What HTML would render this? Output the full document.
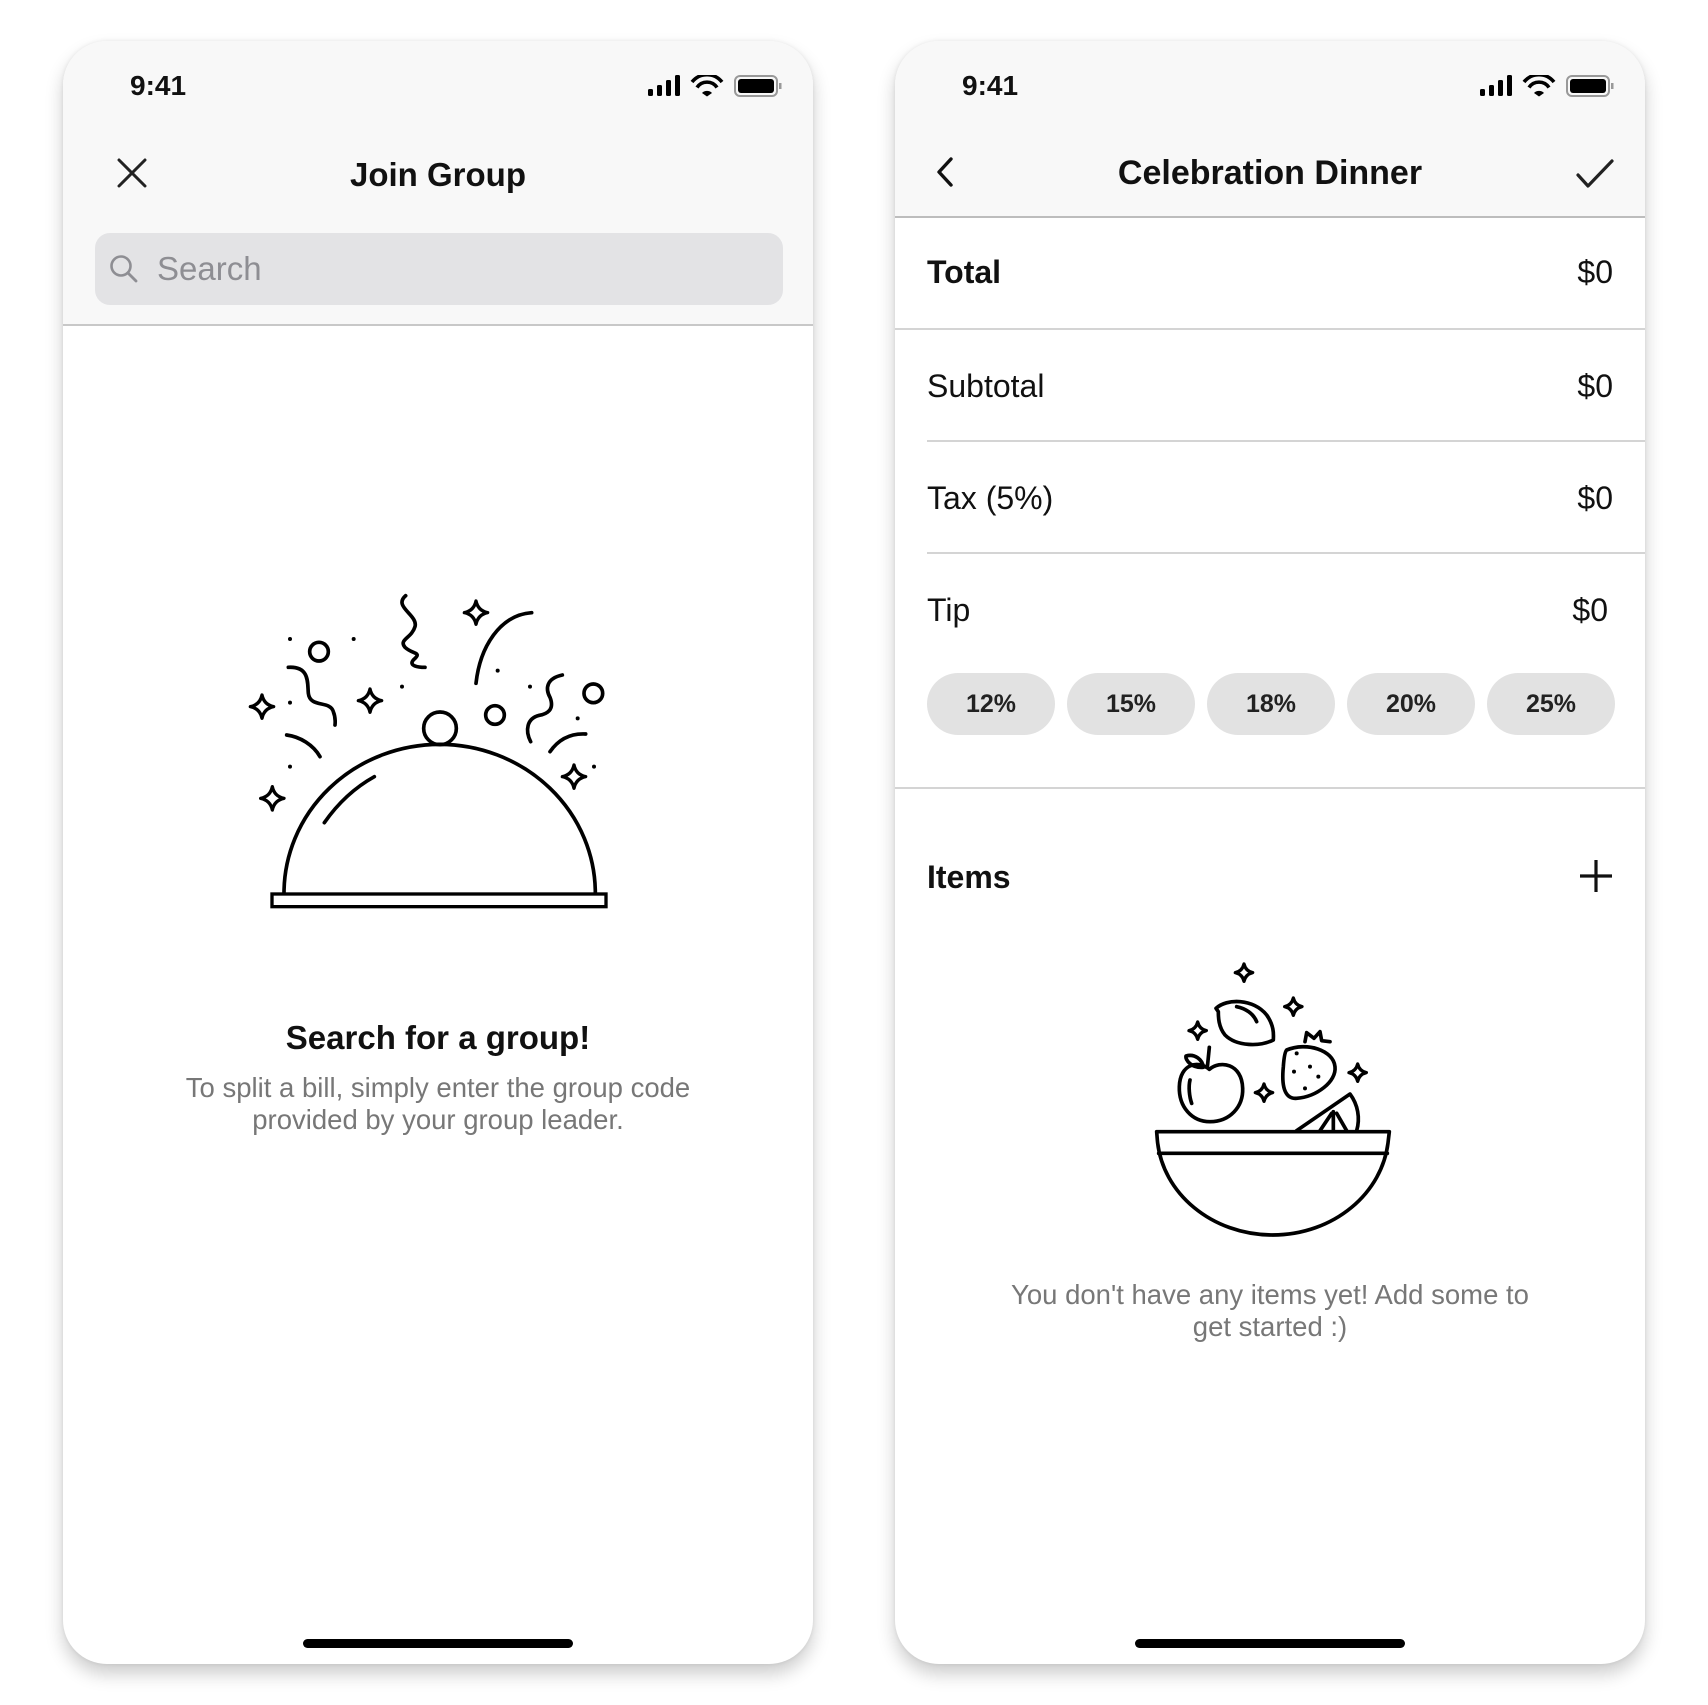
<!DOCTYPE html>
<html><head><meta charset="utf-8"><style>
*{margin:0;padding:0;box-sizing:border-box}
body{width:1708px;height:1705px;background:#fff;position:relative;overflow:hidden;font-family:"Liberation Sans",sans-serif;color:#111}
.ph{position:absolute;top:41px;width:750px;height:1623px;background:#fff;border-radius:44px;overflow:hidden;box-shadow:0 10px 18px rgba(0,0,0,.2),0 0 4px rgba(0,0,0,.08)}
.a{position:absolute}
.time{font-size:28px;font-weight:bold;top:29px}
.t{font-weight:bold;font-size:33px;text-align:center;width:100%;left:0}
.hb{position:absolute;height:9px;border-radius:5px;background:#000;bottom:16px}
.row{position:absolute;left:32px;right:32px;font-size:32px}
.row .v{position:absolute;right:0;top:0}
.sep{position:absolute;height:2px;background:#d4d4d4;right:0}
.pill{position:absolute;top:632px;width:128px;height:62px;border-radius:31px;background:#e2e2e2;font-weight:bold;font-size:25px;text-align:center;line-height:62px;color:#222}
</style></head><body>

<!-- LEFT PHONE -->
<div class="ph" style="left:63px">
  <div class="a" style="left:0;top:0;width:750px;height:285px;background:#f8f8f8;border-bottom:2px solid #c8c8c8"></div>
  <div class="a time" style="left:67px">9:41</div>
  <svg class="a" style="left:585px;top:34px" width="135" height="22" viewBox="0 0 135 22">
    <rect x="0" y="14" width="5" height="7" rx="1.5"/><rect x="9" y="10" width="5" height="11" rx="1.5"/><rect x="18" y="5" width="5" height="16" rx="1.5"/><rect x="27" y="0" width="5" height="21" rx="1.5"/>
    <path d="M44 7 A19 19 0 0 1 74 7" fill="none" stroke="#000" stroke-width="3.6"/><path d="M49 12.5 A12 12 0 0 1 69 12.5" fill="none" stroke="#000" stroke-width="3.6"/><path d="M54 18 L59 21.5 L64 18 A7 7 0 0 0 54 18Z"/>
    <rect x="87" y="1" width="42" height="20" rx="5" fill="none" stroke="#999" stroke-width="2"/><rect x="90" y="4" width="36" height="14" rx="3"/><rect x="131" y="8" width="2.5" height="6" fill="#999"/>
  </svg>
  <svg class="a" style="left:54px;top:117px" width="30" height="30" viewBox="0 0 30 30"><path d="M2 2L28 28M28 2L2 28" stroke="#222" stroke-width="3" stroke-linecap="round"/></svg>
  <div class="a t" style="top:115px">Join Group</div>
  <div class="a" style="left:32px;top:192px;width:688px;height:72px;border-radius:15px;background:#e3e3e5"></div>
  <svg class="a" style="left:46px;top:213px" width="30" height="30" viewBox="0 0 30 30"><circle cx="12" cy="12" r="9.5" fill="none" stroke="#8e8e93" stroke-width="2.6"/><path d="M19 19L27 27" stroke="#8e8e93" stroke-width="2.8" stroke-linecap="round"/></svg>
  <div class="a" style="left:94px;top:209px;font-size:33px;color:#8e8e93">Search</div>
  <div class="a t" style="top:978px">Search for a group!</div>
  <div class="a" style="left:0;width:750px;top:1031px;text-align:center;font-size:27.5px;line-height:32px;color:#777">To split a bill, simply enter the group code<br>provided by your group leader.</div>
  <div class="hb" style="left:240px;width:270px"></div>
</div>

<svg class="a" style="left:200px;top:560px" width="460" height="380" viewBox="0 0 1380 1140" fill="none" stroke="#000" stroke-width="11" stroke-linecap="round">
  <rect x="216" y="1002" width="1002" height="38" stroke-width="10"/>
  <path d="M252 1000 A467 447 0 0 1 1186 1000"/>
  <path d="M373 788 C410 735 460 685 523 650"/>
  <circle cx="720" cy="505" r="49"/>
  <circle cx="357" cy="275" r="28"/><circle cx="885" cy="465" r="28"/><circle cx="1180" cy="400" r="28"/>
  <g fill="#000" stroke="none"><circle cx="270" cy="237" r="6"/><circle cx="461" cy="237" r="6"/><circle cx="270" cy="428" r="6"/><circle cx="606" cy="380" r="6"/><circle cx="893" cy="332" r="6"/><circle cx="990" cy="380" r="6"/><circle cx="1133" cy="475" r="6"/><circle cx="270" cy="620" r="6"/><circle cx="1182" cy="620" r="6"/></g>
  <g stroke-width="10" stroke-linejoin="round">
  <path d="M186 405 Q192 434 221 440 Q192 446 186 475 Q180 446 151 440 Q180 434 186 405Z"/>
  <path d="M510 387 Q516 416 545 422 Q516 428 510 457 Q504 428 475 422 Q504 416 510 387Z"/>
  <path d="M217 680 Q223 709 252 715 Q223 721 217 750 Q211 721 182 715 Q211 709 217 680Z"/>
  <path d="M828 123 Q834 152 863 158 Q834 164 828 193 Q822 164 793 158 Q822 152 828 123Z"/>
  <path d="M1122 615 Q1128 644 1157 650 Q1128 656 1122 685 Q1116 656 1087 650 Q1116 644 1122 615Z"/>
  </g>
  <path d="M265 322 C330 318 322 370 325 400 C330 445 390 420 400 455 C408 475 405 495 405 495"/>
  <path d="M617 107 C578 140 655 165 645 200 C635 235 595 238 615 262 C640 285 668 275 640 300 C625 318 655 322 675 322"/>
  <path d="M828 370 C840 260 900 165 995 158"/>
  <path d="M1087 345 C1040 355 1035 385 1050 412 C1065 450 1040 462 1018 466 C980 475 975 512 992 545"/>
  <path d="M260 525 C300 530 340 555 360 590"/>
  <path d="M1050 575 C1080 532 1120 520 1157 522"/>
</svg>

<!-- RIGHT PHONE -->
<div class="ph" style="left:895px">
  <div class="a" style="left:0;top:0;width:750px;height:177px;background:#f8f8f8;border-bottom:2px solid #bdbdbd"></div>
  <div class="a time" style="left:67px">9:41</div>
  <svg class="a" style="left:585px;top:34px" width="135" height="22" viewBox="0 0 135 22">
    <rect x="0" y="14" width="5" height="7" rx="1.5"/><rect x="9" y="10" width="5" height="11" rx="1.5"/><rect x="18" y="5" width="5" height="16" rx="1.5"/><rect x="27" y="0" width="5" height="21" rx="1.5"/>
    <path d="M44 7 A19 19 0 0 1 74 7" fill="none" stroke="#000" stroke-width="3.6"/><path d="M49 12.5 A12 12 0 0 1 69 12.5" fill="none" stroke="#000" stroke-width="3.6"/><path d="M54 18 L59 21.5 L64 18 A7 7 0 0 0 54 18Z"/>
    <rect x="87" y="1" width="42" height="20" rx="5" fill="none" stroke="#999" stroke-width="2"/><rect x="90" y="4" width="36" height="14" rx="3"/><rect x="131" y="8" width="2.5" height="6" fill="#999"/>
  </svg>
  <svg class="a" style="left:38px;top:115px" width="24" height="32" viewBox="0 0 24 32"><path d="M18 3L6 16L18 29" fill="none" stroke="#111" stroke-width="3.4" stroke-linecap="round" stroke-linejoin="round"/></svg>
  <div class="a t" style="top:113px;font-size:34px">Celebration Dinner</div>
  <svg class="a" style="left:680px;top:117px" width="40" height="32" viewBox="0 0 40 32"><path d="M3 17L13 28L37 3" fill="none" stroke="#222" stroke-width="3.2" stroke-linecap="round" stroke-linejoin="round"/></svg>

  <div class="row" style="top:213px;font-weight:bold">Total<span class="v" style="font-weight:normal">$0</span></div>
  <div class="sep" style="left:0;top:287px"></div>
  <div class="row" style="top:327px">Subtotal<span class="v">$0</span></div>
  <div class="sep" style="left:32px;top:399px"></div>
  <div class="row" style="top:439px">Tax (5%)<span class="v">$0</span></div>
  <div class="sep" style="left:32px;top:511px"></div>
  <div class="row" style="top:551px">Tip<span class="v" style="right:5px">$0</span></div>
  <div class="pill" style="left:32px">12%</div>
  <div class="pill" style="left:172px">15%</div>
  <div class="pill" style="left:312px">18%</div>
  <div class="pill" style="left:452px">20%</div>
  <div class="pill" style="left:592px">25%</div>
  <div class="sep" style="left:0;top:746px"></div>
  <div class="row" style="top:818px;font-weight:bold">Items</div>
  <svg class="a" style="left:684px;top:818px" width="34" height="34" viewBox="0 0 34 34"><path d="M17 1V33M1 17H33" stroke="#111" stroke-width="3.2"/></svg>
  <div class="a" style="left:0;width:750px;top:1238px;text-align:center;font-size:27.5px;line-height:32px;color:#777">You don't have any items yet! Add some to<br>get started :)</div>
  <div class="hb" style="left:240px;width:270px"></div>
</div>

<svg class="a" style="left:1120px;top:940px" width="320" height="320" viewBox="0 0 960 960" fill="none" stroke="#000" stroke-width="11" stroke-linecap="round" stroke-linejoin="round">
  <path d="M110 575 H808 L805 600 C790 760 640 885 458 885 C276 885 126 760 112 600 Z"/>
  <path d="M116 640 H802"/>
  <path d="M530 572 L690 462 A125 125 0 0 1 710 572"/>
  <path d="M600 572 L635 520 M640 572 L640 515 M680 572 L650 520"/>
  <path d="M268 388 C235 360 180 370 178 440 C176 500 215 545 270 545 C330 545 370 500 368 445 C366 370 300 360 268 388Z"/>
  <path d="M210 420 C205 440 208 470 215 490"/>
  <path d="M262 382 L268 322"/>
  <path d="M250 382 C215 385 195 360 198 348 C225 340 248 360 250 382Z"/>
  <path d="M288 205 C320 175 400 175 440 225 C465 260 460 290 460 300 C420 320 350 320 315 285 C295 260 295 230 295 215 Z"/>
  <path d="M350 200 C375 205 400 220 410 245"/>
  <path d="M500 330 C560 305 640 330 645 380 C650 425 590 470 530 475 C490 478 485 430 490 380 C492 350 495 335 500 330Z"/>
  <path d="M555 305 L560 278 L582 295 L600 275 L605 302 L630 305"/>
  <g fill="#000" stroke="none"><circle cx="530" cy="340" r="6"/><circle cx="570" cy="380" r="6"/><circle cx="522" cy="395" r="6"/><circle cx="595" cy="410" r="6"/><circle cx="555" cy="445" r="6"/></g>
  <g stroke-width="10">
  <path d="M372 72 Q377 93 398 98 Q377 103 372 124 Q367 103 346 98 Q367 93 372 72Z"/>
  <path d="M520 174 Q525 195 546 200 Q525 205 520 226 Q515 205 494 200 Q515 195 520 174Z"/>
  <path d="M233 246 Q238 267 259 272 Q238 277 233 298 Q228 277 207 272 Q228 267 233 246Z"/>
  <path d="M432 432 Q437 453 458 458 Q437 463 432 484 Q427 463 406 458 Q427 453 432 432Z"/>
  <path d="M713 372 Q718 393 739 398 Q718 403 713 424 Q708 403 687 398 Q708 393 713 372Z"/>
  </g>
</svg>
</body></html>
